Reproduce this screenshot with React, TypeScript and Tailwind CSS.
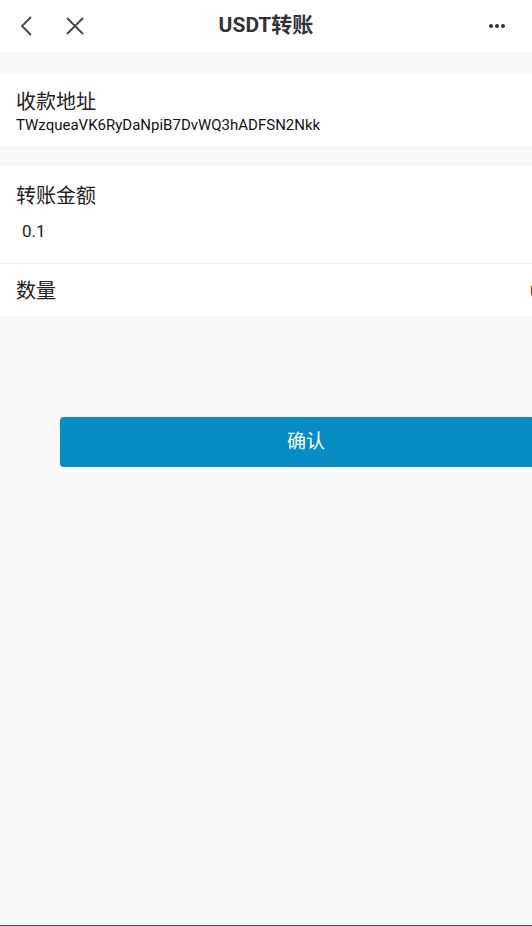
import { useState } from "react";

const font = "font-['Roboto','Noto_Sans_CJK_SC',sans-serif]";

function BackIcon() {
	return (
		<svg width="14" height="22" viewBox="0 0 14 22" fill="none" stroke="#444" strokeWidth="1.8">
			<path d="M12 2 L3 11 L12 20" />
		</svg>
	);
}

function CloseIcon() {
	return (
		<svg width="18" height="18" viewBox="0 0 18 18" fill="none" stroke="#444" strokeWidth="1.8">
			<path d="M1 1 L17 17 M17 1 L1 17" />
		</svg>
	);
}

export default function App() {
	const [amount] = useState("0.1");

	return (
		<div className={`w-[532px] h-[926px] overflow-hidden bg-[#f9f9f9] flex flex-col ${font} border-b border-[#3c5a52]`}>
			{/* header */}
			<header className="h-[52px] bg-white flex items-center relative shrink-0">
				<div className="flex items-center pl-[19px] gap-[33px]">
					<BackIcon />
					<CloseIcon />
				</div>
				<h1 className="absolute left-0 right-0 text-center text-[21px] font-bold text-[#333] pointer-events-none">USDT转账</h1>
				<div className="ml-auto pr-[27px] flex gap-[2px]">
					<span className="w-[4px] h-[4px] rounded-full bg-[#333]"></span>
					<span className="w-[4px] h-[4px] rounded-full bg-[#333]"></span>
					<span className="w-[4px] h-[4px] rounded-full bg-[#333]"></span>
				</div>
			</header>

			<div className="h-[22px] shrink-0"></div>

			{/* address */}
			<section className="bg-white h-[71px] px-[16px] pt-[14px] shrink-0">
				<div className="text-[20px] leading-[28px] text-[#222]">收款地址</div>
				<div className="text-[15px] leading-[18px] text-[#111]">TWzqueaVK6RyDaNpiB7DvWQ3hADFSN2Nkk</div>
			</section>

			<div className="h-[22px] shrink-0"></div>

			{/* amount */}
			<section className="bg-white shrink-0 w-[600px]">
				<div className="px-[16px] pt-[15px] h-[97px] border-b border-[#f2f2f2]">
					<div className="text-[20px] leading-[28px] text-[#222]">转账金额</div>
					<div className="mt-[10px] pl-[6px] text-[17px] leading-[22px] text-[#222]">{amount}</div>
				</div>
				<div className="h-[52px] px-[16px] pt-[2px] flex items-center">
					<span className="text-[20px] text-[#222]">数量</span>
					<span className="ml-[474px] text-[20px] text-[#111]">0</span>
				</div>
			</section>

			<div className="pt-[101px] pl-[60px]">
				<button className="w-[492px] h-[50px] rounded-[4px] bg-[#078dc3] text-white text-[19px]">确认</button>
			</div>
		</div>
	);
}
